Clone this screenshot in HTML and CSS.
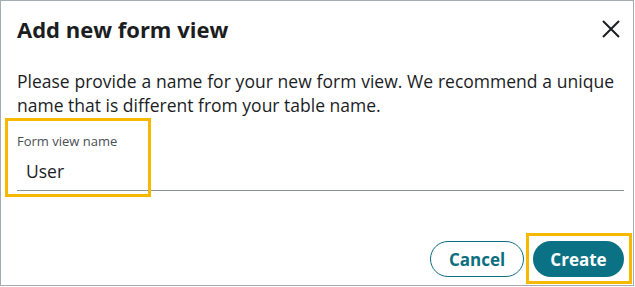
FILE: index.html
```html
<!DOCTYPE html>
<html lang="en">
<head>
  <meta charset="UTF-8">
  <title>Add new form view</title>
  <link rel="stylesheet" href="styles.css">
</head>
<body>

  <div class="dialog">
    <div class="dialog-header">
      <h2>Add new form view</h2>
      <button class="close-btn" aria-label="Close">
        <svg width="18" height="18" viewBox="0 0 18 18">
          <path d="M1 1 L17 17 M17 1 L1 17" stroke="#1b1d1f" stroke-width="2" fill="none"/>
        </svg>
      </button>
    </div>

    <p class="intro">Please provide a name for your new form view. We recommend a unique name that is different from your table name.</p>

    <div class="field">
      <label for="viewName">Form view name</label>
      <input id="viewName" type="text" value="User">
      <!-- marca de resaltado -->
      <span class="highlight field-highlight"></span>
    </div>

    <div class="dialog-buttons">
      <button class="cancel-btn">Cancel</button>
      <button class="create-btn">Create
        <span class="highlight create-highlight"></span>
      </button>
    </div>
  </div>

</body>
</html>
```

FILE: styles.css
```css
body {
  margin: 0;
  font-family: "Open Sans", "Noto Sans", sans-serif;
  color: #1b1d1f;
  background: #fff;
}

.dialog {
  width: 634px;
  height: 286px;
  box-sizing: border-box;
  border: 1px solid #a3abb3;
  padding: 0 9px 0 16px;
  display: flex;
  flex-direction: column;
}

.dialog-header {
  display: flex;
  align-items: center;
  justify-content: space-between;
  height: 56px;
}

.dialog-header h2 {
  margin: 0;
  font-size: 22px;
  font-weight: 700;
}

.close-btn {
  border: none;
  background: none;
  padding: 0;
  margin-right: 4px;
  cursor: pointer;
  display: flex;
}

.intro {
  margin: 12px 0 0;
  font-size: 17.5px;
  line-height: 24px;
  padding-right: 10px;
  text-align: justify;
}

.field {
  position: relative;
  margin-top: 16px;
  width: 607px;
}

.field label {
  display: block;
  font-size: 13px;
  color: #4a4f54;
  line-height: 17px;
}

.field input {
  display: block;
  width: 100%;
  box-sizing: border-box;
  border: none;
  border-bottom: 1px solid #8a9292;
  padding: 9px 9px 7px;
  font: inherit;
  font-size: 17.5px;
  color: #1b1d1f;
  outline: none;
}

.highlight {
  position: absolute;
  border: 3px solid #f7b900;
  box-sizing: border-box;
  pointer-events: none;
}

.field-highlight {
  left: -12px;
  top: -15px;
  width: 146px;
  height: 79px;
}

.dialog-buttons {
  margin-top: auto;
  margin-bottom: 8px;
  display: flex;
  justify-content: flex-end;
  gap: 9px;
}

.dialog-buttons button {
  height: 36px;
  border-radius: 18px;
  font: inherit;
  font-size: 17px;
  font-weight: 700;
  cursor: pointer;
}

.cancel-btn {
  width: 94px;
  background: #fff;
  color: #0c6f80;
  border: 1px solid #0c6f80;
}

.create-btn {
  position: relative;
  width: 91px;
  background: #0b7285;
  color: #fff;
  border: none;
}

.create-highlight {
  left: -7px;
  top: -8px;
  width: 106px;
  height: 51px;
}
```
